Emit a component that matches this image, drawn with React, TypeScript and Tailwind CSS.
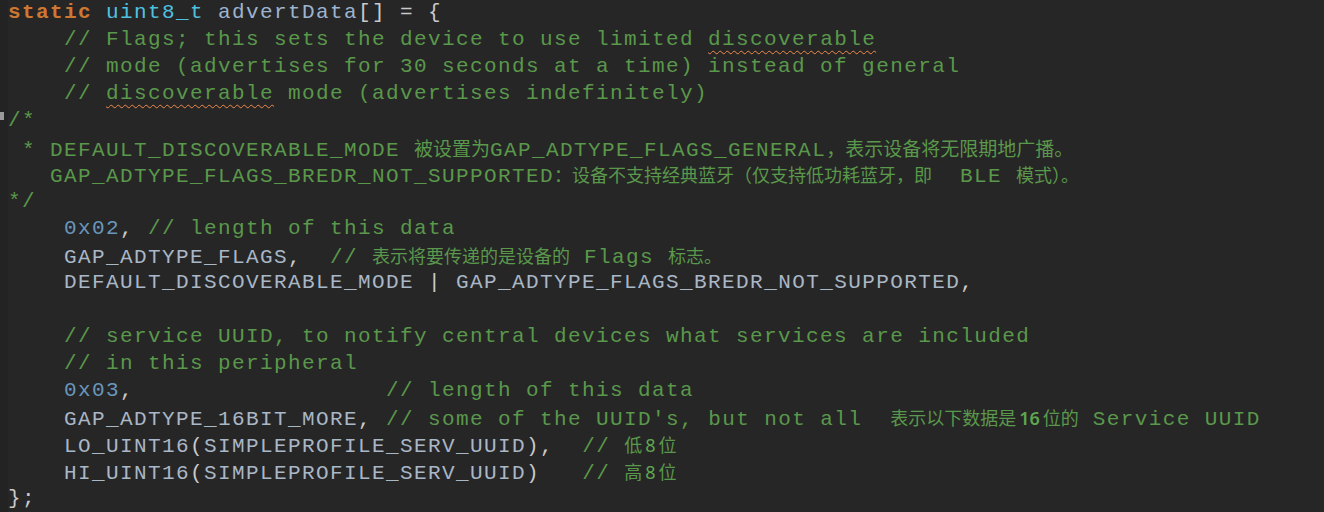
import type { ReactNode } from 'react';

const K = ({ children }: { children: ReactNode }) => <span className="font-bold text-[#cc7832]">{children}</span>;
const T = ({ children }: { children: ReactNode }) => <span className="text-[#4fc1e0]">{children}</span>;
const N = ({ children }: { children: ReactNode }) => <span className="text-[#6897bb]">{children}</span>;
const P = ({ children }: { children: ReactNode }) => <span className="text-[#c9c9c9]">{children}</span>;
const C = ({ children }: { children: ReactNode }) => <span className="text-[#5a984b]">{children}</span>;

const Z = ({ children, size = 'text-[18px]' }: { children: ReactNode; size?: string }) => (
  <span className={`font-['Noto_Sans_CJK_SC',sans-serif] tracking-normal text-[#5a984b] ${size}`}>{children}</span>
);

const Digit = ({ children, bold }: { children: ReactNode; bold?: boolean }) => (
  <span
    className={`font-['Noto_Sans','Noto_Sans_CJK_SC',sans-serif] text-[18px] tracking-normal text-[#5fa650] mx-[3px] ${
      bold ? 'font-semibold' : ''
    }`}
  >
    {children}
  </span>
);

const Squiggle = ({ children }: { children: ReactNode }) => (
  <span className="underline decoration-wavy decoration-[#ee8a4c] decoration-1 underline-offset-[5px]">{children}</span>
);

function Line({ children, fold }: { children?: ReactNode; fold?: boolean }) {
  return (
    <div className="flex h-[27px] leading-[27px]">
      <div className="relative w-[8px] shrink-0 bg-[#232323]">
        {fold && <div className="absolute left-0 top-[5px] h-[8px] w-[4px] bg-[#9a9a9a]" />}
      </div>
      <div className="whitespace-pre text-[#a9b7c6]">{children}</div>
    </div>
  );
}

export default function App() {
  return (
    <div className="h-[512px] w-full overflow-hidden bg-[#262626] font-['Liberation_Mono',monospace] text-[21px] tracking-[1.4px]">
      <div className="-mt-px">
        <Line>
          <K>static</K> <T>uint8_t</T> <span className="text-[#9db4d0]">advertData</span>
          <P>[] = {'{'}</P>
        </Line>
        <Line>
          <C>
            {'    // Flags; this sets the device to use limited '}
            <Squiggle>discoverable</Squiggle>
          </C>
        </Line>
        <Line>
          <C>{'    // mode (advertises for 30 seconds at a time) instead of general'}</C>
        </Line>
        <Line>
          <C>
            {'    // '}
            <Squiggle>discoverable</Squiggle>
            {' mode (advertises indefinitely)'}
          </C>
        </Line>
        <Line fold>
          <C>/*</C>
        </Line>
        <Line>
          <C>{' * DEFAULT_DISCOVERABLE_MODE '}</C>
          <Z size="text-[19px]">被设置为</Z>
          <C>GAP_ADTYPE_FLAGS_GENERAL</C>
          <Z size="text-[19px]">，表示设备将无限期地广播。</Z>
        </Line>
        <Line>
          <C>{'   GAP_ADTYPE_FLAGS_BREDR_NOT_SUPPORTED'}</C>
          <Z>：设备不支持经典蓝牙（仅支持低功耗蓝牙，即</Z>
          <C>{'  BLE '}</C>
          <Z>模式）。</Z>
        </Line>
        <Line>
          <C>*/</C>
        </Line>
        <Line>
          {'    '}
          <N>0x02</N>
          <P>, </P>
          <C>// length of this data</C>
        </Line>
        <Line>
          {'    GAP_ADTYPE_FLAGS'}
          <P>{',  '}</P>
          <C>{'// '}</C>
          <Z>表示将要传递的是设备的</Z>
          <C>{' Flags '}</C>
          <Z>标志。</Z>
        </Line>
        <Line>
          {'    DEFAULT_DISCOVERABLE_MODE '}
          <P>|</P>
          {' GAP_ADTYPE_FLAGS_BREDR_NOT_SUPPORTED'}
          <P>,</P>
        </Line>
        <Line />
        <Line>
          <C>{'    // service UUID, to notify central devices what services are included'}</C>
        </Line>
        <Line>
          <C>{'    // in this peripheral'}</C>
        </Line>
        <Line>
          {'    '}
          <N>0x03</N>
          <P>{',                  '}</P>
          <C>// length of this data</C>
        </Line>
        <Line>
          {'    GAP_ADTYPE_16BIT_MORE'}
          <P>, </P>
          <C>{"// some of the UUID's, but not all  "}</C>
          <Z>表示以下数据是</Z>
          <Digit bold>16</Digit>
          <Z>位的</Z>
          <C>{' Service UUID'}</C>
        </Line>
        <Line>
          {'    LO_UINT16'}
          <P>(</P>
          SIMPLEPROFILE_SERV_UUID
          <P>{'),  '}</P>
          <C>{'// '}</C>
          <Z>低</Z>
          <Digit>8</Digit>
          <Z>位</Z>
        </Line>
        <Line>
          {'    HI_UINT16'}
          <P>(</P>
          SIMPLEPROFILE_SERV_UUID
          <P>{')   '}</P>
          <C>{'// '}</C>
          <Z>高</Z>
          <Digit>8</Digit>
          <Z>位</Z>
        </Line>
        <Line>
          <P>{'};'}</P>
        </Line>
      </div>
    </div>
  );
}
